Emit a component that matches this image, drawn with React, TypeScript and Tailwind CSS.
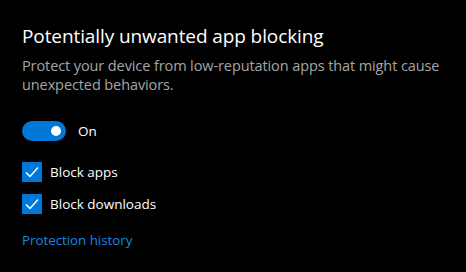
export default function App() {
  return (
    <div className="bg-black w-[466px] h-[272px] px-[22px] pt-[22px] font-['Open_Sans',sans-serif] text-white">
      <h2 className="text-[19px] leading-[28px] tracking-[-0.1px]">Potentially unwanted app blocking</h2>
      <p className="mt-[6px] text-[14.5px] leading-[19px] tracking-[-0.1px] text-[#a6a6a6]">
        Protect your device from low-reputation apps that might cause unexpected behaviors.
      </p>
      <div className="flex items-center gap-3 mt-[27px]">
        <div className="flex items-center justify-end bg-[#0078d7] rounded-full w-[44px] h-[20px] px-[5px]">
          <div className="bg-white rounded-full w-[10px] h-[10px]"></div>
        </div>
        <span className="text-[13.5px] leading-[20px]">On</span>
      </div>
      <div className="flex flex-col gap-[12px] mt-[21px]">
        <CheckRow label="Block apps" />
        <CheckRow label="Block downloads" />
      </div>
      <a className="block mt-[16px] text-[13.3px] leading-[20px] text-[#1a86e0]">Protection history</a>
    </div>
  );
}

function CheckRow({ label }: { label: string }) {
  return (
    <div className="flex items-center gap-2">
      <div className="flex items-center justify-center bg-[#0078d7] w-[20px] h-[20px]">
        <svg className="w-[14px] h-[14px]" viewBox="0 0 14 14" fill="none" stroke="white" strokeWidth={1.5}>
          <path d="M1 7.5l4 4L13 2.5" />
        </svg>
      </div>
      <span className="text-[13.5px] leading-[20px]">{label}</span>
    </div>
  );
}
